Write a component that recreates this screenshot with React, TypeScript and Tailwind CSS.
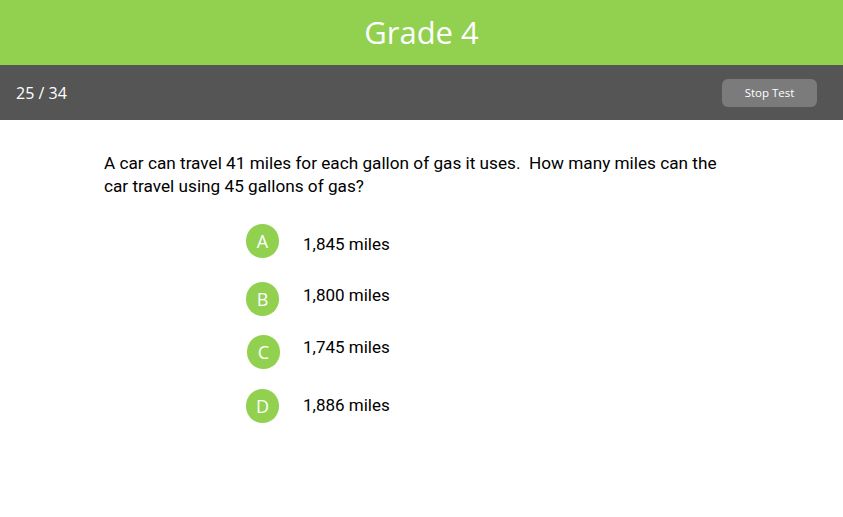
const OPTIONS = [
  { letter: 'A', text: '1,845 miles', row: 'mb-6', textPad: 'pt-2 ml-[24px]', circlePad: 'ml-0' },
  { letter: 'B', text: '1,800 miles', row: 'mb-[19px]', textPad: 'pt-px ml-[24px]', circlePad: 'ml-0' },
  { letter: 'C', text: '1,745 miles', row: 'mb-5', textPad: 'pt-0 ml-[23px]', circlePad: 'ml-px' },
  { letter: 'D', text: '1,886 miles', row: 'mb-0', textPad: 'pt-1 ml-[24px]', circlePad: 'ml-0' },
];

export default function App() {
  return (
    <div className="w-[843px] h-[517px] bg-white overflow-hidden">
      <header className="h-[65px] bg-[#92d050] flex items-center justify-center">
        <h1 className="text-white text-[31px] font-['Open_Sans',sans-serif] leading-none">Grade 4</h1>
      </header>

      <div className="h-[55px] bg-[#555555] flex items-center justify-between pl-4 pr-[26px]">
        <span className="text-white text-base font-['Open_Sans',sans-serif]">25 / 34</span>
        <button className="w-[95px] h-[28px] rounded-md bg-[#7b7b7b] text-white text-[11.5px] font-['Open_Sans',sans-serif]">
          Stop Test
        </button>
      </div>

      <main className="pl-[104px] pt-[32px] font-['Roboto',sans-serif] text-black">
        <p className="w-[630px] text-[17.2px] leading-[23px]">
          A car can travel 41 miles for each gallon of gas it uses.&nbsp; How many miles can the car travel using 45 gallons of gas?
        </p>

        <ul className="mt-[26px] ml-[142px] flex flex-col">
          {OPTIONS.map((o) => (
            <li key={o.letter} className={`flex items-start ${o.row}`}>
              <div className={`w-[33px] h-[34px] rounded-full bg-[#92d050] flex items-center justify-center text-white text-[18px] font-['Open_Sans',sans-serif] ${o.circlePad}`}>
                {o.letter}
              </div>
              <span className={`text-[17px] leading-6 ${o.textPad}`}>{o.text}</span>
            </li>
          ))}
        </ul>
      </main>
    </div>
  );
}
